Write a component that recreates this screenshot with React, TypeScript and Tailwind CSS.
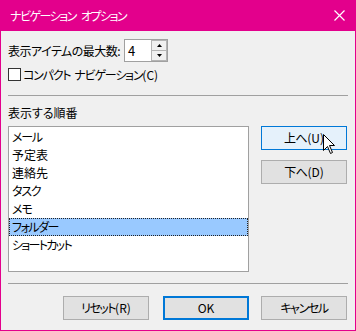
import React from 'react';

const jp = "font-['Yu_Gothic_UI','Noto_Sans_CJK_JP',sans-serif] [font-feature-settings:'palt']";

// kana-heavy rows get tighter tracking to match Meiryo UI widths
const items = [
  { label: 'メール', cls: 'tracking-[-1.2px]' },
  { label: '予定表', cls: '' },
  { label: '連絡先', cls: '' },
  { label: 'タスク', cls: 'tracking-[-1.2px]' },
  { label: 'メモ', cls: 'tracking-[-1px]' },
  { label: 'フォルダー', cls: 'tracking-[-1.5px]' },
  { label: 'ショートカット', cls: 'tracking-[-1.7px]' },
];

function Cursor() {
  return (
    <svg className="absolute left-[62px] top-[8px]" width="13" height="21" viewBox="0 0 13 21">
      <path d="M0.5 0.5 L0.5 16.5 L4.5 12.5 L7.5 19.5 L9.5 18.5 L6.5 11.5 L11.5 11.5 Z" fill="#fff" stroke="#000" strokeWidth="1" />
    </svg>
  );
}

function Btn({ jpText, key2, tight, cls }: { jpText: string; key2: string; tight: string; cls: string }) {
  return (
    <div className={`w-[86px] h-[24px] flex items-center justify-center whitespace-nowrap ${cls}`}>
      <span className={tight}>{jpText}</span>
      <span>{key2}</span>
    </div>
  );
}

export default function App() {
  return (
    <div className={`w-[356px] h-[331px] bg-[#f0f0f0] border-x border-b border-[#e3008c] flex flex-col text-[12px] text-black ${jp}`}>
      {/* title bar */}
      <div className="h-[31px] shrink-0 bg-[#e3008c] flex items-center justify-between pl-[9px] pr-[10px] text-white">
        <span className="leading-none whitespace-nowrap">
          <span className="tracking-[-1.5px]">ナビゲーション</span>
          <span className="ml-[5px] tracking-[-1.5px]">オプション</span>
        </span>
        <svg width="11" height="11" viewBox="0 0 11 11">
          <path d="M0.5 0.5 L10.5 10.5 M10.5 0.5 L0.5 10.5" stroke="#fff" strokeWidth="1.2" />
        </svg>
      </div>

      <div className="flex flex-col pl-[7px] pr-[7px]">
        {/* max items */}
        <div className="mt-[8px] flex items-center h-[23px]">
          <span className="w-[116px] shrink-0 whitespace-nowrap leading-none tracking-[-0.5px]">表示アイテムの最大数:</span>
          <div className="flex h-[23px] w-[44px] border border-[#a0a0a0] bg-white">
            <div className="flex-1 pl-[3px] flex items-center leading-none text-[13px]">4</div>
            <div className="w-[16px] flex flex-col bg-[#f0f0f0]">
              <div className="flex-1 border border-[#b4b4b4] bg-[#f0f0f0] flex items-center justify-center">
                <svg width="5" height="3" viewBox="0 0 5 3"><path d="M2.5 0 L5 3 L0 3 Z" fill="#000" /></svg>
              </div>
              <div className="flex-1 border border-t-0 border-[#b4b4b4] bg-[#f0f0f0] flex items-center justify-center">
                <svg width="5" height="3" viewBox="0 0 5 3"><path d="M0 0 L5 0 L2.5 3 Z" fill="#000" /></svg>
              </div>
            </div>
          </div>
        </div>

        {/* compact nav checkbox */}
        <div className="mt-[6px] flex items-center h-[13px]">
          <div className="w-[13px] h-[13px] border border-[#333] bg-white" />
          <span className="ml-[2px] leading-none whitespace-nowrap">
            <span className="tracking-[-1.2px]">コンパクト</span>
            <span className="ml-[4px] tracking-[-1.2px]">ナビゲーション</span>
            <span>(C)</span>
          </span>
        </div>

        <div className="mt-[14px] h-px w-[340px] bg-[#a0a0a0]" />

        <div className="mt-[11px] leading-none">表示する順番</div>

        {/* list + buttons */}
        <div className="mt-[7px] flex">
          <div className="w-[241px] h-[146px] border border-[#a0a0a0] bg-white flex flex-col pt-[1px]">
            {items.map((it) => (
              <div
                key={it.label}
                className={
                  it.label === 'フォルダー'
                    ? `h-[18px] leading-[16px] pl-[2px] bg-[#99c9ff] border border-dotted border-[#222] ${it.cls}`
                    : `h-[18px] leading-[18px] pl-[3px] ${it.cls}`
                }
              >
                {it.label}
              </div>
            ))}
          </div>
          <div className="ml-[12px] flex flex-col gap-[10px]">
            <div className="relative">
              <Btn jpText="上へ" key2="(U)" tight="tracking-[-0.5px]" cls="border border-[#0078d7] bg-[#e5f1fb]" />
              <Cursor />
            </div>
            <Btn jpText="下へ" key2="(D)" tight="tracking-[-0.5px]" cls="border border-[#adadad] bg-[#e1e1e1]" />
          </div>
        </div>

        <div className="mt-[11px] h-px w-[340px] bg-[#a0a0a0]" />

        {/* bottom buttons */}
        <div className="mt-[12px] flex pl-[55px]">
          <Btn jpText="リセット" key2="(R)" tight="tracking-[-1.5px]" cls="border border-[#adadad] bg-[#e1e1e1]" />
          <div className="ml-[14px] w-[86px] h-[24px] border-2 border-[#0078d7] bg-[#e1e1e1] flex items-center justify-center">
            OK
          </div>
          <div className="ml-[12px]">
            <Btn jpText="キャンセル" key2="" tight="tracking-[-1.4px]" cls="border border-[#adadad] bg-[#e1e1e1]" />
          </div>
        </div>
      </div>
    </div>
  );
}
